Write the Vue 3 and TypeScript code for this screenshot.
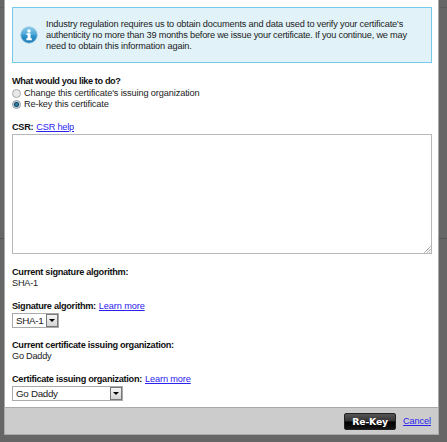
<script setup lang="ts">
import { ref } from 'vue'

const action = ref<'change' | 'rekey'>('rekey')
const csr = ref('')
const options: { id: 'change' | 'rekey'; label: string }[] = [
  { id: 'change', label: "Change this certificate's issuing organization" },
  { id: 'rekey', label: 'Re-key this certificate' },
]
</script>

<template>
  <div class="page">
    <main class="dialog">
      <div class="body">
        <section class="notice">
          <svg class="info" viewBox="0 0 18 18">
            <defs>
              <linearGradient id="ball" x1="0" y1="0" x2="0" y2="1">
                <stop offset="0" stop-color="#8ccbe9" />
                <stop offset="0.48" stop-color="#4ba6d6" />
                <stop offset="0.54" stop-color="#2f92ca" />
                <stop offset="1" stop-color="#1f7db9" />
              </linearGradient>
            </defs>
            <circle cx="9" cy="9" r="8.3" fill="url(#ball)" stroke="#a3cde2" stroke-width="0.7" />
            <circle cx="9" cy="5" r="1.7" fill="#fff" />
            <path d="M6.5 7.3H10.6V12.2H11.8V14.2H6.4V12.2H7.6V9.1H6.5Z" fill="#fff" />
          </svg>
          <p class="notice-text">
            <span class="l1">Industry regulation requires us to obtain documents and data used to verify your certificate's</span><br />
            <span class="l2">authenticity no more than 39 months before we issue your certificate. If you continue, we may</span><br />
            <span class="l3">need to obtain this information again.</span>
          </p>
        </section>

        <section class="choices">
          <b class="line question">What would you like to do?</b>
          <label v-for="o in options" :key="o.id" class="choice" @click="action = o.id">
            <span class="radio" :class="{ on: action === o.id }"></span>
            <span :class="o.id + '-label'">{{ o.label }}</span>
          </label>
        </section>

        <div class="line csr-label"><b>CSR:</b><a>CSR help</a></div>
        <div class="area">
          <textarea v-model="csr"></textarea>
          <svg class="grip" viewBox="0 0 7 7">
            <path d="M0.5 6.5L6.5 0.5M3.2 6.5L6.5 3.2M5.7 6.5L6.5 5.7" stroke="#666" stroke-width="0.9" stroke-dasharray="1.3 0.5" />
          </svg>
        </div>

        <section class="current first">
          <b class="line">Current signature algorithm:</b>
          <span class="line value">SHA-1</span>
        </section>
        <section class="field">
          <div class="line"><b>Signature algorithm:</b><a>Learn more</a></div>
          <div class="select small"><span>SHA-1</span><i class="drop"></i></div>
        </section>
        <section class="current">
          <b class="line">Current certificate issuing organization:</b>
          <span class="line value">Go Daddy</span>
        </section>
        <section class="field">
          <div class="line"><b>Certificate issuing organization:</b><a>Learn more</a></div>
          <div class="select wide"><span>Go Daddy</span><i class="drop"></i></div>
        </section>
      </div>
      <footer class="footer">
        <button class="submit">Re-Key</button>
        <a class="cancel">Cancel</a>
      </footer>
    </main>
  </div>
</template>

<style>
body {
  margin: 0;
  background: #666;
}
</style>

<style scoped>
.page {
  box-sizing: border-box;
  width: 447px;
  height: 442px;
  padding: 0 8px 0 4px;
  overflow: hidden;
  background: linear-gradient(#5c5c5c, #5c5c5c) 0 7px / 100% 1px no-repeat,
    linear-gradient(#555, #555) 0 238px / 100% 1px no-repeat, #666;
  font: 9.2px/11px "Liberation Sans", Arial, sans-serif;
  letter-spacing: -0.12px;
  color: #222;
  white-space: nowrap;
}
.dialog {
  box-sizing: border-box;
  width: 435px;
  height: 435px;
  border: 1px solid #aaa;
  border-top: 0;
  background: #fff;
  display: flex;
  flex-direction: column;
}
.body {
  box-sizing: border-box;
  height: 407px;
  padding: 7px 7px 0;
}
.notice {
  box-sizing: border-box;
  height: 56px;
  width: 420px;
  border: 1px solid #75c9e9;
  background: #e1f2f9;
  display: flex;
  align-items: center;
  padding-left: 7px;
}
.info {
  width: 18px;
  height: 18px;
  flex: none;
}
.notice-text {
  margin: 0 0 0 8px;
}
.l1 {
  letter-spacing: -0.17px;
}
.l2 {
  letter-spacing: -0.2px;
}
.l3 {
  letter-spacing: -0.13px;
}
.choices {
  margin-top: 13px;
}
.line {
  display: block;
  height: 11px;
}
b {
  color: #111;
  letter-spacing: -0.3px;
}
.question {
  letter-spacing: -0.4px;
}
.value {
  letter-spacing: -0.25px;
}
a {
  color: #2a22f0;
  text-decoration: underline;
  cursor: pointer;
}
.line a {
  margin-left: 3px;
}
.choice {
  display: flex;
  height: 11px;
  align-items: center;
}
.rekey-label {
  letter-spacing: -0.14px;
}
.radio {
  box-sizing: border-box;
  width: 9px;
  height: 9px;
  margin-right: 3px;
  border: 1px solid #aaa;
  border-radius: 50%;
  background: #e8e8e8;
}
.choices .line {
  height: 12px;
}
.radio.on {
  border-color: #8d99a4;
  background: radial-gradient(circle, #2c80ad 0 1px, #153e5a 2px, #dce5ec 3.2px);
}
.csr-label {
  margin-top: 12px;
}
.csr-label a {
  letter-spacing: -0.2px;
}
.area {
  position: relative;
  width: 420px;
  height: 120px;
  margin-top: 1px;
}
textarea {
  display: block;
  box-sizing: border-box;
  width: 100%;
  height: 100%;
  border: 1px solid #b8b8bc;
  padding: 2px;
  resize: none;
  outline: 0;
  font: inherit;
}
.grip {
  position: absolute;
  right: 1px;
  bottom: 1px;
  width: 7px;
  height: 7px;
}
.current {
  margin-top: 12px;
}
.current.first {
  margin-top: 13px;
}
.field {
  margin-top: 12px;
}
.select {
  box-sizing: border-box;
  height: 15px;
  margin-top: 1px;
  border: 1px solid #aaa;
  display: flex;
  justify-content: space-between;
  align-items: center;
  padding-left: 3px;
  font-size: 9.8px;
  letter-spacing: -0.3px;
}
.small {
  width: 47px;
}
.wide {
  width: 111px;
}
.drop {
  box-sizing: border-box;
  width: 12px;
  height: 13px;
  border: 1px solid #777;
  background: linear-gradient(#f6f6f6, #d4d4d4);
  display: flex;
  align-items: center;
  justify-content: center;
}
.drop::before {
  content: "";
  border: 3px solid transparent;
  border-top-color: #000;
  border-bottom: 0;
}
.footer {
  box-sizing: border-box;
  flex: 1;
  border-top: 1px solid #aaa;
  background: #ccc;
  display: flex;
  align-items: center;
  justify-content: flex-end;
  padding-right: 7px;
}
.submit {
  width: 52px;
  height: 17px;
  padding: 0;
  border: 1px solid #222;
  border-radius: 2px;
  background: linear-gradient(#555 0, #333 48%, #000 52%, #151515 100%);
  color: #fff;
  font: bold 9.3px/13px "DejaVu Sans", Verdana, sans-serif;
  letter-spacing: -0.2px;
}
.cancel {
  margin-left: 7px;
  letter-spacing: -0.12px;
}
</style>
